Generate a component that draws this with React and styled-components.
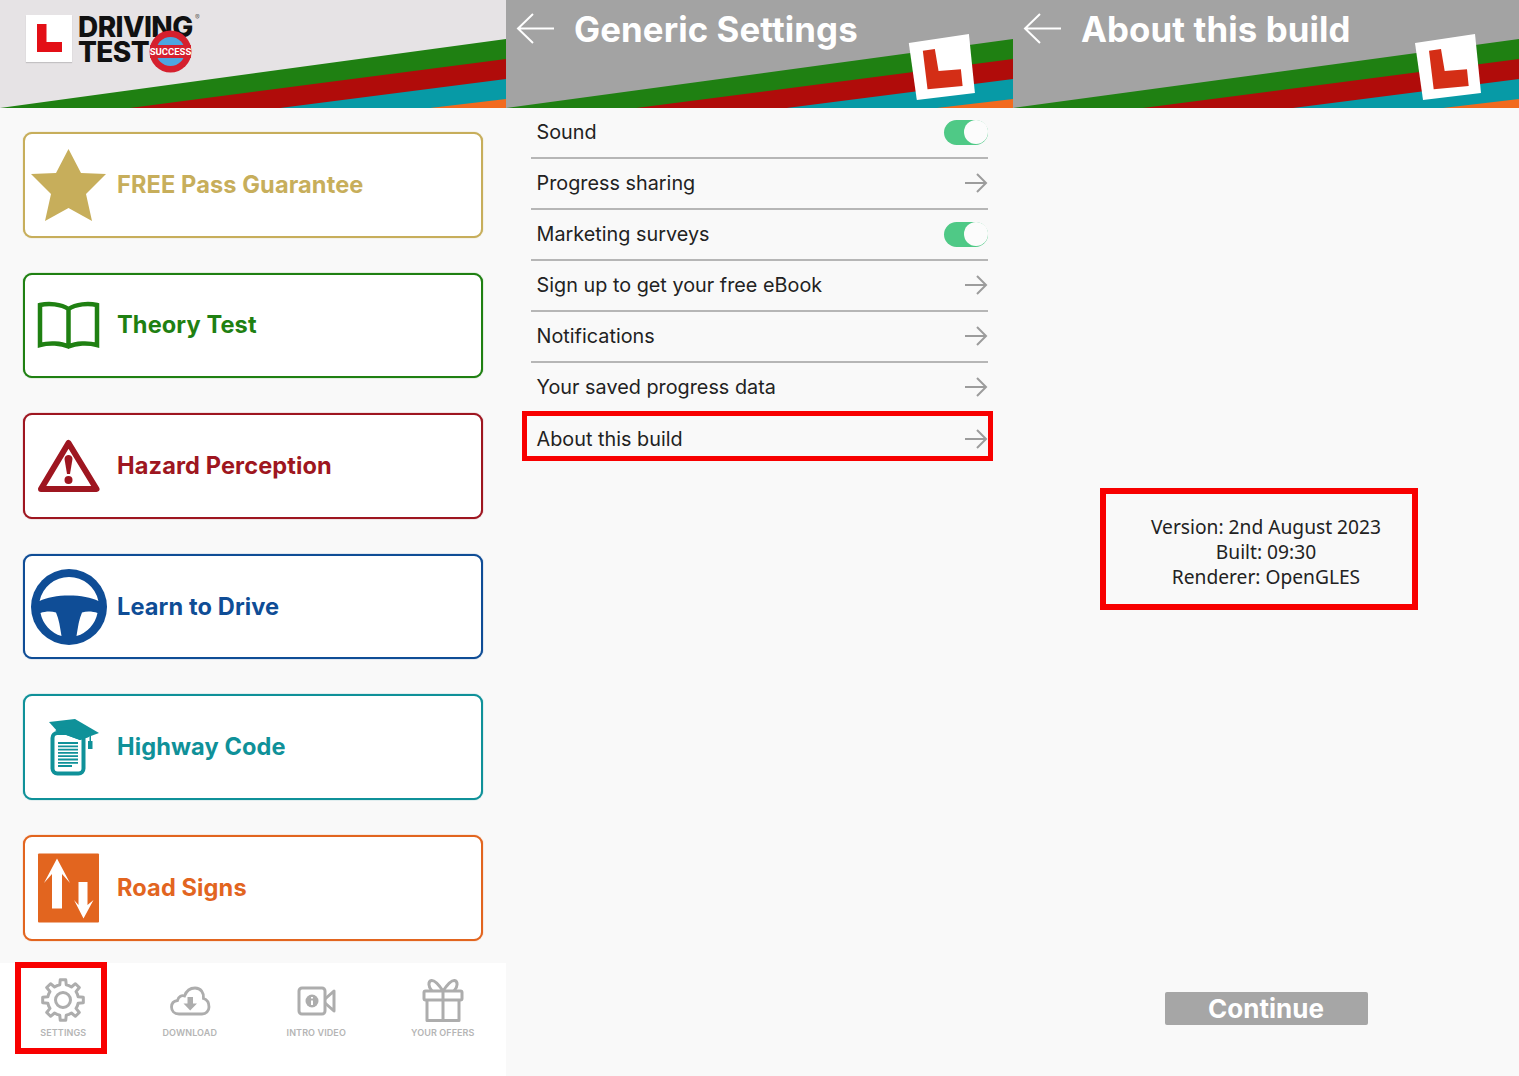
import React from 'react';
import styled, { createGlobalStyle } from 'styled-components';

const Global = createGlobalStyle`
  html, body { margin: 0; padding: 0; background: #f9f9f9; }
  * { box-sizing: border-box; }
`;

const Page = styled.div`
  display: grid;
  grid-template-columns: 506px 507px 506px;
  width: 1519px;
  height: 1076px;
  overflow: hidden;
  font-family: Inter, "Liberation Sans", sans-serif;
`;
const Screen = styled.section`
  display: flex;
  flex-direction: column;
  height: 1076px;
  background: #f9f9f9;
`;
const Header = styled.header`
  position: relative;
  flex: 0 0 108px;
  height: 108px;
  background: ${p => p.$bg};
  overflow: hidden;
`;
const Stripes = styled.svg`
  position: absolute;
  inset: 0;
  width: 100%;
  height: 100%;
`;
const Bar = styled.div`
  position: relative;
  display: flex;
  align-items: center;
  height: 58px;
  padding-left: 10px;
  gap: 18px;
`;
const Title = styled.h1`
  margin: 0;
  font-size: 34.8px;
  font-weight: 700;
  color: #fff;
  line-height: 58px;
  letter-spacing: 0.1px;
`;

const Logo = styled.div`
  position: relative;
  display: flex;
  gap: 6px;
  padding: 15px 0 0 26px;
`;
const Plate = styled.div`
  width: 46px;
  height: 47px;
  background: #fff;
  box-shadow: 0 1px 1px rgba(0,0,0,.15);
`;
const Wordmark = styled.div`
  font-size: 28px;
  font-weight: 800;
  line-height: 25px;
  letter-spacing: -0.6px;
  color: #111;
`;
const Registered = styled.sup`
  position: absolute;
  top: 14px;
  left: 195px;
  font-size: 7px;
  line-height: 7px;
  font-weight: 400;
  color: #666;
`;
const Roundel = styled.svg`
  position: absolute;
  left: 149px;
  top: 30px;
  width: 43px;
  height: 43px;
`;

const CardList = styled.div`
  flex: 1;
  display: flex;
  flex-direction: column;
  gap: 35px;
  padding: 24px 23px 0;
`;
const Card = styled.div`
  display: flex;
  align-items: center;
  gap: 10px;
  height: 105.6px;
  padding-left: 6px;
  background: #fff;
  border: 2px solid ${p => p.$c};
  border-radius: 9px;
  color: ${p => p.$c};
  box-shadow: 0 0 1px ${p => p.$c};
`;
const CardIcon = styled.svg`
  flex: 0 0 76px;
  width: 76px;
  height: 76px;
`;
const CardLabel = styled.span`
  margin-bottom: 1px;
  font-size: 23.6px;
  font-weight: 700;
  letter-spacing: 0.1px;
`;

const TabBar = styled.nav`
  position: relative;
  display: grid;
  grid-template-columns: repeat(4, 1fr);
  height: 113px;
  background: #fff;
`;
const Tab = styled.div`
  display: flex;
  flex-direction: column;
  align-items: center;
  padding-top: 13px;
  color: #adadad;
`;
const TabIcon = styled.svg`
  width: 48px;
  height: 48px;
`;
const TabLabel = styled.span`
  margin-top: 3px;
  font-size: 9px;
  font-weight: 600;
  line-height: 11px;
  letter-spacing: 0.1px;
  text-transform: uppercase;
  color: #b5b5b5;
`;
const Highlight = styled.div`
  position: absolute;
  border: ${p => p.$w || 6}px solid #f80000;
  pointer-events: none;
`;
const SettingsMark = styled(Highlight)`
  left: 15px;
  top: -1px;
  width: 92px;
  height: 92px;
`;

const Rows = styled.div`
  display: flex;
  flex-direction: column;
  padding: 0 25px;
`;
const Row = styled.div`
  position: relative;
  display: flex;
  align-items: center;
  justify-content: space-between;
  height: 51px;
  padding: 0 0 1px 5.5px;
  border-bottom: ${p => (p.$last ? 'none' : '2px solid #b6b6b6')};
  font-size: 19.8px;
  letter-spacing: 0.02px;
  color: #222;
`;
const RowMark = styled(Highlight)`
  left: -9px;
  right: -5px;
  top: -3px;
  height: 50px;
`;
const Toggle = styled.div`
  position: relative;
  width: 44px;
  height: 25px;
  border-radius: 13px;
  background: #4fc986;
`;
const Knob = styled.div`
  position: absolute;
  right: 0;
  top: 0.5px;
  width: 24px;
  height: 24px;
  border-radius: 50%;
  background: #fcfcfc;
`;
const RowArrow = styled.svg`
  width: 24px;
  height: 22px;
`;

const AboutBody = styled.div`
  flex: 1;
  display: flex;
  flex-direction: column;
  align-items: center;
  padding-top: 380px;
  padding-bottom: 51px;
`;
const Message = styled.div`
  position: relative;
  width: 318px;
  height: 122px;
  margin-right: 14px;
  display: flex;
  flex-direction: column;
  justify-content: center;
  padding: 5px 0 0 14px;
  font-family: "Noto Sans", "Open Sans", sans-serif;
  font-size: 19.2px;
  line-height: 25.3px;
  color: #222;
  text-align: center;
`;
const MessageMark = styled(Highlight)`
  inset: 0;
`;
const Continue = styled.button`
  margin-top: auto;
  width: 203px;
  height: 33px;
  border: none;
  padding: 0;
  border-radius: 2px;
  background: #a6a6a6;
  color: #fff;
  font-family: inherit;
  font-size: 26px;
  font-weight: 700;
  line-height: 33px;
`;

const HeaderArt = ({ plate }) => (
  <Stripes viewBox="0 0 506 108" preserveAspectRatio="none">
    <polygon points="0,108 506,39 506,108" fill="#1f8012" />
    <polygon points="130,108 506,59 506,108" fill="#b00c0a" />
    <polygon points="280,108 506,79 506,108" fill="#079aa6" />
    <polygon points="430,108 506,99 506,108" fill="#f26a1e" />
    {plate && (
      <>
        <polygon points="402,43 462,34 468,93 410,100" fill="#fff" />
        <polygon points="416,50.7 428,49 431.7,71 454,69.3 455.7,86 420.7,89.3" fill="#d42e16" />
      </>
    )}
  </Stripes>
);

const BackArrow = () => (
  <svg width="40" height="32" viewBox="0 0 40 32" fill="none" stroke="#fff" strokeWidth="2">
    <path d="M38 15.5H2M17 1L2 15.5L17 30" />
  </svg>
);

const Star = () => (
  <CardIcon viewBox="0 0 76 76">
    <polygon fill="currentColor" points="37.5,2 50,26 75,27 55,47 61,74 37.5,61 14,74 20,47 0,27 25,26" />
  </CardIcon>
);
const Book = () => (
  <CardIcon viewBox="0 0 76 76" fill="none" stroke="currentColor" strokeWidth="4.500">
    <path d="M37.5 22C30 17 18 16 9 18V58C18 55.500 30 56 37.500 59.500C45 56 57 55.500 66 58V18C57 16 45 17 37.500 22ZM37.500 22V59.500" />
  </CardIcon>
);
const Warning = () => (
  <CardIcon viewBox="0 0 76 76">
    <path d="M37.500 15L65.500 61H10Z" fill="none" stroke="currentColor" strokeWidth="6" strokeLinejoin="round" />
    <path d="M33.500 31C33.500 25.500 41.500 25.500 41.500 31L39 46H36Z" fill="currentColor" />
    <circle cx="37.500" cy="52" r="4" fill="currentColor" />
  </CardIcon>
);
const Wheel = () => (
  <CardIcon viewBox="0 0 76 76">
    <circle cx="38" cy="38" r="38" fill="currentColor" />
    <path fill="#fff" d="M8.600 32A30 30 0 0 1 67.400 32C54 24.500 22 24.500 8.600 32ZM9.500 44C14 42.500 20 42 25 43.500C28 50 29 58 30.500 67A30 30 0 0 1 9.500 44ZM66.500 44C62 42.500 56 42 51 43.500C48 50 47 58 45.500 67A30 30 0 0 0 66.500 44Z" />
  </CardIcon>
);
const Cap = () => (
  <CardIcon viewBox="0 0 76 76">
    <rect x="21.500" y="24" width="31" height="40.500" rx="5" fill="none" stroke="currentColor" strokeWidth="4" />
    <path stroke="currentColor" strokeWidth="1.800" d="M27 34H47M27 37.300H47M27 40.600H47M27 43.900H47M27 47.200H47M27 50.500H47M27 53.800H47M27 57H41" />
    <polygon fill="currentColor" points="18,13 44,10 68,24 49,31 27,23" />
    <polygon fill="currentColor" points="24,22 49,31 58,28 58,22 30,18" />
    <rect x="58.500" y="26" width="1.500" height="8" fill="currentColor" />
    <rect x="57" y="32" width="4.500" height="8" fill="currentColor" />
  </CardIcon>
);
const Road = () => (
  <CardIcon viewBox="0 0 76 76">
    <rect x="7" y="3.500" width="61" height="69" rx="1" fill="currentColor" />
    <polygon fill="#fff" points="26,8.500 39,33 31,24 31,58.500 21,58.500 21,24 13,33" />
    <polygon fill="#fff" points="47.500,32 56.500,32 56.500,55 62.500,50 52.500,68.500 43,50 47.500,55" />
  </CardIcon>
);

const gearPath = () => {
  const teeth = 8, R = 20.5, r = 15.5, cx = 24, cy = 24;
  const pts = [];
  for (let i = 0; i < teeth; i++) {
    const a = (i / teeth) * Math.PI * 2 - Math.PI / 2;
    const s = (Math.PI * 2) / teeth;
    [[-0.5, r], [-0.27, r], [-0.17, R], [0.17, R], [0.27, r]].forEach(([t, rad]) => {
      pts.push(`${(cx + rad * Math.cos(a + t * s)).toFixed(2)} ${(cy + rad * Math.sin(a + t * s)).toFixed(2)}`);
    });
  }
  return `M${pts.join('L')}Z`;
};

const Gear = () => (
  <TabIcon viewBox="0 0 48 48" fill="none" stroke="currentColor" strokeWidth="3" strokeLinejoin="round">
    <path d={gearPath()} />
    <circle cx="24" cy="24" r="7.500" strokeWidth="3" />
  </TabIcon>
);
const Cloud = () => (
  <TabIcon viewBox="0 0 48 48" fill="none" stroke="currentColor" strokeWidth="2.800" strokeLinecap="round">
    <path d="M13 38C8 38 5.500 34.500 5.500 31C5.500 27.500 8 25 11.500 24.500C12.500 20 16 19 18.500 20C20.500 14.500 25 12 29 12C35 12 38 17 37.500 22.500C41 23.500 43 27 43 31C43 35 40 38 36 38Z" />
    <path fill="currentColor" stroke="none" d="M21.500 21H27V27.500H31L24.200 34.500L17.500 27.500H21.500Z" />
  </TabIcon>
);
const Video = () => (
  <TabIcon viewBox="0 0 48 48" fill="none" stroke="currentColor" strokeWidth="3" strokeLinejoin="round">
    <rect x="7" y="12" width="26" height="26" rx="3" />
    <path d="M33 23L42 15V35L33 27" />
    <circle cx="20" cy="25" r="6.500" fill="currentColor" stroke="none" />
    <path d="M20 24.500V29M20 21V22.500" stroke="#fff" strokeWidth="2" />
  </TabIcon>
);
const Gift = () => (
  <TabIcon viewBox="0 0 48 48" fill="none" stroke="currentColor" strokeWidth="3" strokeLinejoin="round">
    <rect x="5" y="15" width="38" height="9" rx="1.500" />
    <path d="M8 24V44.500H40V24M24 15V44.500" />
    <path d="M24 15C20 9 16 4 12.500 4.500C9 5 9 11 13 15M24 15C28 9 32 4 35.500 4.500C39 5 39 11 35 15" />
  </TabIcon>
);
const RightArrow = () => (
  <RowArrow viewBox="0 0 24 22" fill="none" stroke="#9c9c9c" strokeWidth="2">
    <path d="M1 11H22M13 2L22 11L13 20" />
  </RowArrow>
);
const Switch = () => (
  <Toggle>
    <Knob />
  </Toggle>
);

const cards = [
  ['FREE Pass Guarantee', '#c7ae5b', Star],
  ['Theory Test', '#1f8012', Book],
  ['Hazard Perception', '#9e1620', Warning],
  ['Learn to Drive', '#0f4d96', Wheel],
  ['Highway Code', '#0f9199', Cap],
  ['Road Signs', '#e2651f', Road],
];
const tabs = [
  ['Settings', Gear],
  ['Download', Cloud],
  ['Intro video', Video],
  ['Your offers', Gift],
];
const rows = [
  ['Sound', true],
  ['Progress sharing', false],
  ['Marketing surveys', true],
  ['Sign up to get your free eBook', false],
  ['Notifications', false],
  ['Your saved progress data', false],
  ['About this build', false],
];

export default function App() {
  return (
    <Page>
      <Global />
      <Screen>
        <Header $bg="#e6e3e5">
          <HeaderArt />
          <Logo>
            <Plate>
              <svg width="46" height="47" viewBox="0 0 46 47">
                <polygon points="11,9 20.500,9 20.500,27 36,27 36,37 11,37" fill="#e30f16" />
              </svg>
            </Plate>
            <Wordmark>
              DRIVING
              <br />
              TEST
            </Wordmark>
            <Registered>®</Registered>
            <Roundel viewBox="0 0 43 43">
              <circle cx="21.500" cy="21.500" r="21" fill="#d5202e" />
              <circle cx="21.500" cy="21.500" r="14.500" fill="#4da6e0" />
              <rect x="1" y="15" width="41" height="13" fill="#d5202e" />
              <text x="21.500" y="25" textAnchor="middle" fontFamily="Roboto, sans-serif" fontSize="9.500" fontWeight="700" fill="#fff">SUCCESS</text>
            </Roundel>
          </Logo>
        </Header>
        <CardList>
          {cards.map(([label, color, Icon]) => (
            <Card key={label} $c={color}>
              <Icon />
              <CardLabel>{label}</CardLabel>
            </Card>
          ))}
        </CardList>
        <TabBar>
          {tabs.map(([label, Icon]) => (
            <Tab key={label}>
              <Icon />
              <TabLabel>{label}</TabLabel>
            </Tab>
          ))}
          <SettingsMark />
        </TabBar>
      </Screen>

      <Screen>
        <Header $bg="#a3a3a3">
          <HeaderArt plate />
          <Bar>
            <BackArrow />
            <Title>Generic Settings</Title>
          </Bar>
        </Header>
        <Rows>
          {rows.map(([label, toggle], i) => (
            <Row key={label} $last={i === rows.length - 1}>
              <span>{label}</span>
              {toggle ? <Switch /> : <RightArrow />}
              {i === rows.length - 1 && <RowMark $w={5} />}
            </Row>
          ))}
        </Rows>
      </Screen>

      <Screen>
        <Header $bg="#a3a3a3">
          <HeaderArt plate />
          <Bar>
            <BackArrow />
            <Title>About this build</Title>
          </Bar>
        </Header>
        <AboutBody>
          <Message>
            <span>Version: 2nd August 2023</span>
            <span>Built: 09:30</span>
            <span>Renderer: OpenGLES</span>
            <MessageMark />
          </Message>
          <Continue>Continue</Continue>
        </AboutBody>
      </Screen>
    </Page>
  );
}
